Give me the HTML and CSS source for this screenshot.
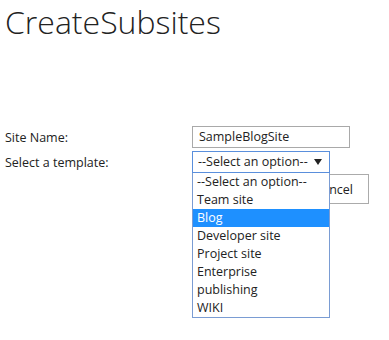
FILE: index.html
```html
<!DOCTYPE html>
<html>
	<head>
		<meta charset="UTF-8">
		<title>CreateSubsites</title>
		<link rel="stylesheet" href="styles.css">
	</head>
	<body>
		<h1 class="title">CreateSubsites</h1>
		<div class="form">
			<div class="row">
				<label class="label">Site Name:</label>
				<div class="field text-box">SampleBlogSite</div>
			</div>
			<div class="row">
				<label class="label">Select a template:</label>
				<div class="picker">
					<div class="field select-box">
						<span>--Select an option--</span>
						<svg class="arrow" width="8" height="6" viewBox="0 0 8 6"><path d="M0 0H8L4 6Z" fill="#222"/></svg>
					</div>
					<ul class="options">
						<li>--Select an option--</li>
						<li>Team site</li>
						<li class="active">Blog</li>
						<li>Developer site</li>
						<li>Project site</li>
						<li>Enterprise</li>
						<li>publishing</li>
						<li>WIKI</li>
					</ul>
				</div>
			</div>
			<div class="buttons">
				<button class="btn">Create</button>
				<button class="btn">Cancel</button>
			</div>
		</div>
	</body>
</html>
```

FILE: styles.css
```css
html {
	height: 100%;
}

body {
	margin: 0;
	min-height: 340px;
	padding: 0 5px;
	font-family: "Open Sans", "Noto Sans", sans-serif;
	font-size: 12.5px;
	color: #222;
	background: #fff;
}

.title {
	margin: 0;
	padding-top: 1px;
	height: 125px;
	font-weight: 300;
	font-size: 32px;
	line-height: 42px;
	color: #222;
}

.form {
	display: flex;
	flex-direction: column;
	gap: 3px;
	padding-bottom: 140px;
}

.row {
	display: flex;
	align-items: center;
	height: 22px;
}

.label {
	width: 187px;
}

.field {
	box-sizing: border-box;
	height: 22px;
	line-height: 20px;
	padding: 0 6px;
	border: 1px solid #a9a9a9;
	white-space: nowrap;
}

.text-box {
	width: 158px;
}

.picker {
	position: relative;
}

.select-box {
	width: 138px;
	border-color: #5a8fdc;
	display: flex;
	align-items: center;
	justify-content: space-between;
	padding: 0 4px 0 5px;
}

.arrow {
	margin-right: 3px;
}

.options {
	position: absolute;
	top: 22px;
	left: 0;
	z-index: 2;
	box-sizing: border-box;
	width: 138px;
	margin: 0;
	padding: 0;
	list-style: none;
	background: #fff;
	border: 1px solid #7a9cd3;
	border-top: none;
}

.options li {
	height: 18px;
	line-height: 18px;
	padding: 0 4px;
	white-space: nowrap;
}

.options .active {
	background: #1e90ff;
	color: #fff;
}

.buttons {
	display: flex;
	justify-content: flex-end;
	gap: 6px;
	width: 364px;
	margin-top: -2px;
}

.btn {
	height: 30px;
	padding: 0 15px;
	font-family: inherit;
	font-size: 12.5px;
	color: #222;
	background: #fff;
	border: 1px solid #ababab;
}
```
